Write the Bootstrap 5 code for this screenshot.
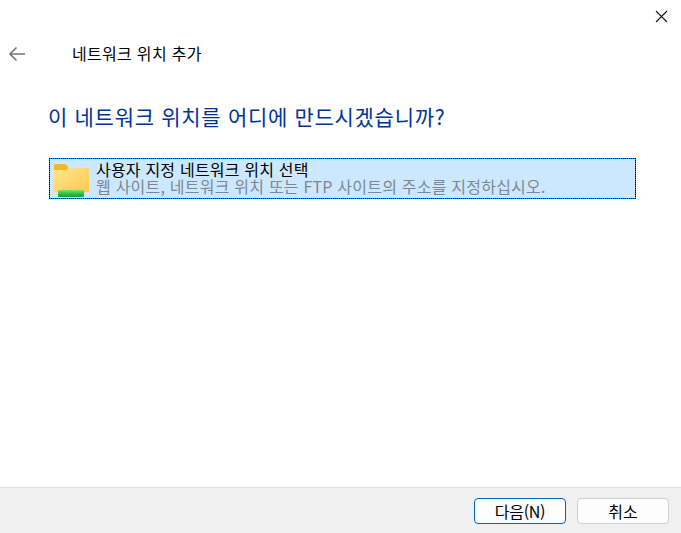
<!DOCTYPE html>
<html lang="ko">
<head>
<meta charset="utf-8">
<title>네트워크 위치 추가</title>
<link rel="stylesheet" href="https://cdn.jsdelivr.net/npm/bootstrap@5.3.0/dist/css/bootstrap.min.css">
<style>
html,body{height:100%;overflow:hidden;background:#fff}
body{font-family:"Noto Sans CJK KR","Liberation Sans",sans-serif;color:#000}
.wiz{height:533px;width:681px}
.close-row{height:33px;padding:10px 13px 0 0}
.nav-row{height:42px;padding-left:8px}
.back-ic{width:18px;height:16px;display:block}
.wiz-title{font-size:16px;line-height:20px;margin-left:46px;margin-top:-3px;letter-spacing:.3px}
.wiz-head{font-size:21px;line-height:28px;color:#003399;margin:0 0 0 48px;padding-top:27px;font-weight:400;letter-spacing:.7px}
.opt{margin:28px 45px 0 49px;height:41px;background:#cce8ff;border:1px solid #0078d7;outline:1px dotted #000;outline-offset:-1px;padding:0 0 0 3px}
.opt-ic{width:38px;height:36px;flex:none;margin-top:2px}
.opt-txt{margin-left:1px}
.opt-main{font-size:16px;line-height:17px;margin-top:2px;letter-spacing:.2px}
.opt-sub{font-size:16px;line-height:17px;color:#7c8791;letter-spacing:.22px}
.foot{height:46px;background:#f0f0f0;border-top:1px solid #dfdfdf;padding:10px 12px 0 0}
.wbtn{width:92px;height:26px;padding:0;font-size:16px;line-height:22px;color:#000;background:#fdfdfd;border:1px solid #d0d0d0;border-radius:4px}
.wbtn-main{border:1px solid #0067c0;margin-right:3px;letter-spacing:-.3px}
</style>
</head>
<body>
<div class="wiz d-flex flex-column">
  <div class="close-row d-flex justify-content-end">
    <svg width="13" height="13" viewBox="0 0 13 13"><path d="M1 1L12 12M12 1L1 12" stroke="#1a1a1a" stroke-width="1.1" fill="none"/></svg>
  </div>
  <div class="nav-row d-flex align-items-center">
    <svg class="back-ic" viewBox="0 0 18 16"><path d="M17 8H2M8.500 1.500L2 8l6.500 6.500" stroke="#757575" stroke-width="1.600" fill="none"/></svg>
    <div class="wiz-title">네트워크 위치 추가</div>
  </div>
  <h1 class="wiz-head">이 네트워크 위치를 어디에 만드시겠습니까?</h1>
  <div class="opt d-flex gap-1">
    <svg class="opt-ic" viewBox="0 0 38 36">
      <defs>
        <linearGradient id="fg" x1="0" y1="0" x2="1" y2="1"><stop offset="0" stop-color="#ffe48e"/><stop offset="1" stop-color="#fdcb50"/></linearGradient>
        <linearGradient id="gr" x1="0" y1="0" x2="0" y2="1"><stop offset="0" stop-color="#7be36f"/><stop offset=".55" stop-color="#2fbb4c"/><stop offset="1" stop-color="#1f9a3a"/></linearGradient>
      </defs>
      <path d="M1 4.500q0-1.500 1.500-1.500h9q1 0 2 1l2 3v3H1z" fill="#f5b91f"/>
      <path d="M1 10q0-1 1-1l11 0 3-2h19q1 0 1 1V31H2q-1 0-1-1z" fill="url(#fg)"/>
      <rect x="1" y="31" width="35" height="4" fill="#e4e4e0"/>
      <rect x="5" y="29" width="26" height="7" rx="1" fill="url(#gr)"/>
    </svg>
    <div class="opt-txt">
      <div class="opt-main">사용자 지정 네트워크 위치 선택</div>
      <div class="opt-sub">웹 사이트, 네트워크 위치 또는 FTP 사이트의 주소를 지정하십시오.</div>
    </div>
  </div>
  <div class="foot mt-auto d-flex justify-content-end gap-2">
    <button type="button" class="btn wbtn wbtn-main">다음(N)</button>
    <button type="button" class="btn wbtn">취소</button>
  </div>
</div>
<script src="https://cdn.jsdelivr.net/npm/bootstrap@5.3.0/dist/js/bootstrap.bundle.min.js"></script>
</body>
</html>
